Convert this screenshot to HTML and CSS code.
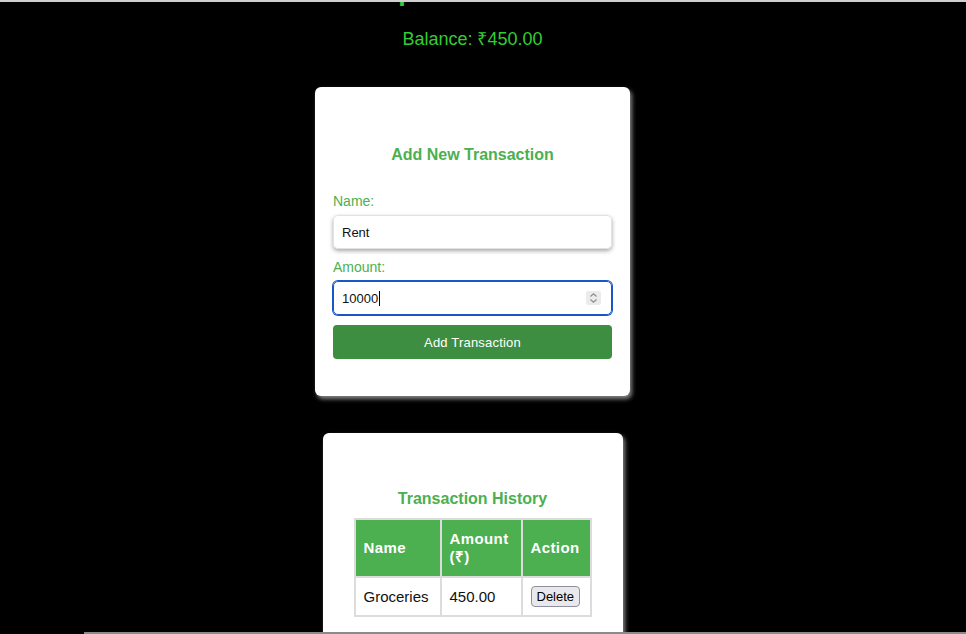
FILE: index.html
```html
<!DOCTYPE html>
<html lang="en">
<head>
<meta charset="utf-8">
<title>Expense Tracker</title>
<link rel="stylesheet" href="styles.css">
</head>
<body>
<div class="page">
  <h1 class="app-title">Expense Tracker</h1>
  <p class="balance">Balance: ₹450.00</p>

  <section class="card card-form">
    <h2 class="card-title">Add New Transaction</h2>
    <label class="field-label">Name:</label>
    <div class="field field-shadow">Rent</div>
    <label class="field-label">Amount:</label>
    <div class="field field-focus">10000<span class="caret"></span>
      <span class="spinner">
        <svg width="9" height="12" viewBox="0 0 9 12"><path d="M1.5 4.5 L4.5 1.8 L7.5 4.5 M1.5 7.5 L4.5 10.2 L7.5 7.5" fill="none" stroke="#8a8a8a" stroke-width="1.1"/></svg>
      </span>
    </div>
    <button class="add-btn">Add Transaction</button>
  </section>

  <section class="card card-history">
    <h2 class="card-title">Transaction History</h2>
    <table class="history">
      <thead>
        <tr>
          <th class="col-name">Name</th>
          <th class="col-amount">Amount (₹)</th>
          <th class="col-action">Action</th>
        </tr>
      </thead>
      <tbody>
        <tr>
          <td>Groceries</td>
          <td>450.00</td>
          <td><button class="del-btn">Delete</button></td>
        </tr>
      </tbody>
    </table>
  </section>
</div>
<div class="frame-line"></div>
</body>
</html>
```
FILE: styles.css
```css
html, body {
  margin: 0;
  padding: 0;
  background: #000;
}

body {
  font-family: "Liberation Sans", Arial, sans-serif;
  height: 632px;
  overflow: hidden;
  border-top: 2px solid #cfcfcf;
}

.page {
  width: 945px;
  overflow: hidden;
  display: flex;
  flex-direction: column;
  align-items: center;
}

.app-title {
  font-size: 27px;
  line-height: 30px;
  font-weight: bold;
  color: #32cd32;
  margin: -26px 0 0 0;
}

.balance {
  font-size: 18px;
  line-height: 21px;
  color: #32cd32;
  margin: 23px 0 0 0;
}

.card {
  background: #fff;
  border-radius: 6px;
  box-shadow: 2px 3px 4px rgba(190, 190, 190, 0.7);
  box-sizing: border-box;
}

.card-form {
  width: 315px;
  margin-top: 37px;
  padding: 20px 18px 37px;
  display: flex;
  flex-direction: column;
}

.card-title {
  font-size: 16px;
  line-height: 18px;
  font-weight: bold;
  color: #4caf50;
  text-align: center;
  margin: 39px 0 29px;
}

.field-label {
  display: block;
  font-size: 14px;
  line-height: 16px;
  color: #4caf50;
  margin-bottom: 6px;
}

.field {
  position: relative;
  height: 34px;
  box-sizing: border-box;
  border: 1px solid #e2e2e2;
  border-radius: 5px;
  padding: 0 8px;
  display: flex;
  align-items: center;
  font-size: 13px;
  color: #111;
  margin-bottom: 10px;
}

.field-shadow {
  box-shadow: 0 2px 4px rgba(0, 0, 0, 0.35);
}

.field-focus {
  border-color: #1a57c6;
  box-shadow: 0 0 0 1px #1a57c6;
}

.caret {
  display: inline-block;
  width: 1px;
  height: 15px;
  background: #000;
  margin-left: 1px;
}

.spinner {
  position: absolute;
  right: 10px;
  top: 9px;
  width: 15px;
  height: 14px;
  background: #ebebeb;
  border-radius: 2px;
  display: flex;
  align-items: center;
  justify-content: center;
}

.add-btn {
  height: 34px;
  border: none;
  border-radius: 4px;
  background: #3e8e41;
  color: #fff;
  font-family: "Liberation Sans", Arial, sans-serif;
  font-size: 13px;
  letter-spacing: 0.2px;
}

.card-history {
  width: 300px;
  margin-top: 37px;
  padding: 20px 31px 40px;
}

.card-history .card-title {
  margin: 37px 0 10px;
}

.history {
  width: 238px;
  table-layout: fixed;
  border-collapse: separate;
  border-spacing: 0;
  border: 1px solid #dcdcdc;
  font-size: 15px;
  line-height: 18px;
}

.history th,
.history td {
  border: 1px solid #dcdcdc;
  box-sizing: border-box;
  text-align: left;
  vertical-align: middle;
}

.history th {
  background: #4caf50;
  color: #fff;
  font-weight: bold;
  letter-spacing: 0.4px;
  padding: 10px 8px;
}

.history td {
  padding: 8px 8px;
  color: #111;
}

.col-name { width: 86px; }
.col-amount { width: 81px; }
.col-action { width: 69px; }

.del-btn {
  font-family: "Liberation Sans", Arial, sans-serif;
  font-size: 13px;
  height: 21px;
  padding: 0 5px;
  background: #e9e9ed;
  border: 1px solid #8f8f9d;
  border-radius: 4px;
  color: #000;
}

.frame-line {
  position: fixed;
  left: 84px;
  right: 0;
  bottom: 0;
  height: 2px;
  background: #8a8a8a;
}
```
